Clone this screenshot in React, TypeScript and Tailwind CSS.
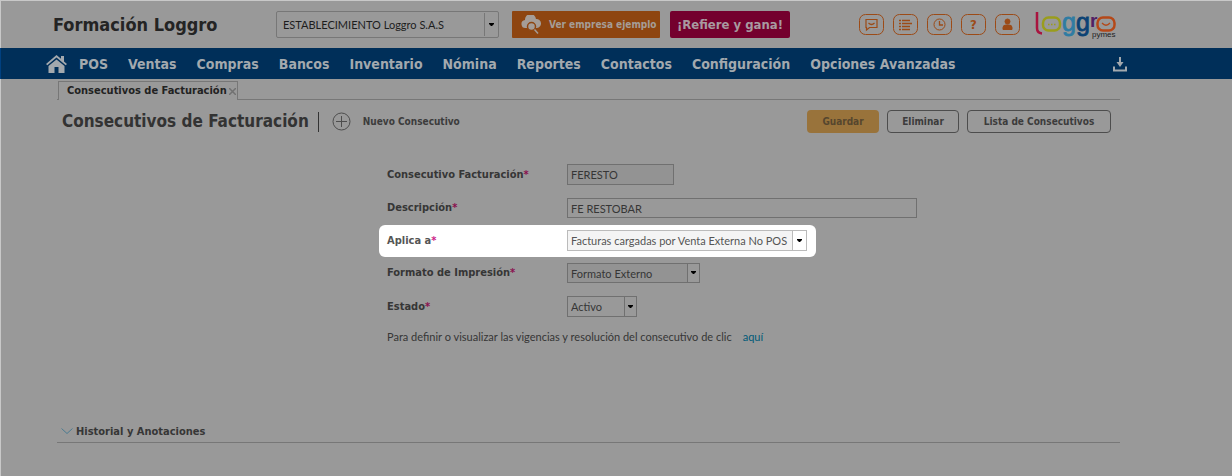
import type { ReactNode } from "react";

const MENU = [
  "POS",
  "Ventas",
  "Compras",
  "Bancos",
  "Inventario",
  "Nómina",
  "Reportes",
  "Contactos",
  "Configuración",
  "Opciones Avanzadas",
];

function Dropdown({
  id,
  label,
  value,
  className = "",
  arrowClassName = "",
}: {
  id: string;
  label?: string;
  value: string;
  className?: string;
  arrowClassName?: string;
}) {
  return (
    <div className={`relative border font-[Lato,sans-serif] ${className}`}>
      <select
        id={id}
        aria-label={label}
        className="block h-full w-full appearance-none bg-transparent pl-[3px] pr-3 pt-[2px] outline-none"
      >
        <option>{value}</option>
      </select>
      <span
        className={`pointer-events-none absolute inset-y-0 right-0 flex w-3 items-center justify-center border-l ${arrowClassName}`}
      >
        <svg width="5" height="3" viewBox="0 0 5 3" aria-hidden>
          <path d="M0 0h5v1L3 3H2L0 1z" fill="#000" />
        </svg>
      </span>
    </div>
  );
}

function FieldLabel({ htmlFor, children }: { htmlFor: string; children: ReactNode }) {
  return (
    <label htmlFor={htmlFor} className="w-[180px] flex-shrink-0 pt-[2px] font-bold">
      {children}
      <span className="text-[#8a104f]">*</span>
    </label>
  );
}

function HeaderIcon({ label, children }: { label: string; children: ReactNode }) {
  return (
    <button type="button" aria-label={label}>
      <svg width="25" height="21" viewBox="0 0 25 21" fill="none" stroke="#9c4b17">
        <rect x="0.5" y="0.5" width="24" height="20" rx="6" />
        {children}
      </svg>
    </button>
  );
}

function Logo() {
  return (
    <svg
      width="82"
      height="32"
      viewBox="0 0 82 32"
      fill="none"
      aria-label="Loggro pymes"
      className="overflow-visible"
    >
      <path d="M3 3V19Q3 24 8 24.500" stroke="#a9143f" strokeWidth="2.500" />
      <rect x="9" y="8.500" width="17" height="13" rx="5.500" stroke="#9a9d1c" strokeWidth="2.500" />
      <path d="M14 15.500h1.500M17 15.500h1.500M20 15.500h1.500" stroke="#9a9d1c" strokeWidth="1.300" />
      <g fontFamily="Liberation Sans" fontSize="25">
        <text x="28" y="22" fill="#2f7ca3" stroke="#2f7ca3" strokeWidth="0.800">g</text>
        <text x="42" y="22" fill="#0b4274" stroke="#0b4274" strokeWidth="0.800">g</text>
      </g>
      <rect x="63.500" y="8.500" width="17" height="13" rx="5.500" stroke="#b54818" strokeWidth="2.500" />
      <path d="M68 14q4 4.500 8 0" stroke="#b54818" strokeWidth="1.300" />
      <text x="56" y="18" fontFamily="Liberation Sans" fontSize="19" fontWeight="bold" fill="#502064">r</text>
      <text x="58" y="28" fontFamily="Liberation Sans" fontSize="8" fill="#222">pymes</text>
    </svg>
  );
}

function Header() {
  return (
    <header className="flex h-[47px] items-center pl-[52px] pr-[116px]">
      <h1 className="w-[223px] flex-shrink-0 text-[18px] font-bold text-[#242424]">Formación Loggro</h1>
      <Dropdown
        id="establecimiento"
        label="Establecimiento"
        value="ESTABLECIMIENTO Loggro S.A.S"
        className="h-[27px] w-[223px] rounded-xs border-[#777] pl-[3px] text-[11px] text-[#1d1d1d]"
        arrowClassName="my-px w-[14px] border-[#777]"
      />
      <button
        type="button"
        className="ml-[13px] flex h-[27px] w-[148px] items-center gap-2 whitespace-nowrap rounded-[1px] bg-[#8e4510] pl-[9px] text-[10px] font-bold text-[#a59d97]"
      >
        <svg width="20" height="19" viewBox="0 0 20 19" aria-hidden>
          <path
            d="M5 13a4 4 0 0 1-1-8 5.500 5.500 0 0 1 11-1 4.500 4.500 0 0 1 1 9z"
            fill="#a59d97"
          />
          <circle cx="10.500" cy="11.500" r="4" fill="#a59d97" stroke="#8e4510" strokeWidth="1.500" />
          <path d="m13.500 14.500 3.500 4" stroke="#a59d97" strokeWidth="1.500" />
        </svg>
        Ver empresa ejemplo
      </button>
      <button
        type="button"
        className="ml-[10px] h-[27px] w-[120px] rounded-xs bg-[#74002e] text-[13px] font-bold text-[#a89aa0]"
      >
        ¡Refiere y gana!
      </button>
      <div className="ml-auto flex items-center">
        <div className="flex gap-[9px] pr-[14px]">
          <HeaderIcon label="Mensajes">
            <path d="M7 5.500h11v8h-7.500l-3 2.500v-2.500H7z M9.500 9q3 3 6 0" strokeWidth="1.200" />
          </HeaderIcon>
          <HeaderIcon label="Lista">
            <path d="M6 6.500h2m1 0h8M6 9.500h2m1 0h10M6 12.500h2m1 0h8M6 15.500h2m1 0h8" strokeWidth="1.700" />
          </HeaderIcon>
          <HeaderIcon label="Historial">
            <circle cx="12.500" cy="10.500" r="5.500" />
            <path d="M12.500 7v4H16" strokeWidth="1.300" />
          </HeaderIcon>
          <HeaderIcon label="Ayuda">
            <text x="9" y="15" fontSize="13" fontWeight="bold" fill="#9c4b17" stroke="none">?</text>
          </HeaderIcon>
          <HeaderIcon label="Usuario">
            <circle cx="12.500" cy="7.500" r="2.500" fill="#9c4b17" />
            <path d="M8 15.500v-2q0-2.500 3-2.500h3q3 0 3 2.500v2z" fill="#9c4b17" />
          </HeaderIcon>
        </div>
        <Logo />
      </div>
    </header>
  );
}

function MainMenu() {
  return (
    <nav className="-ml-px flex h-[31px] items-center border-l border-[#004080] bg-[#002f59] pl-[45px] pr-[104px] pt-px text-[#a3a9ae]">
      <a href="#inicio" aria-label="Inicio" className="mr-3">
        <svg width="21" height="19" viewBox="0 0 21 19" fill="currentColor" aria-hidden>
          <path d="M10.500 0 0 9l1.300 1.300L10.500 2.500l9.200 7.800L21 9l-3-2.600V1h-3v2.800z" />
          <path d="M10.500 4.500 2.500 11v7h6v-6h4v6h6v-7z" />
        </svg>
      </a>
      <ul className="flex gap-5 whitespace-nowrap text-[14px] font-bold">
        {MENU.map((item) => (
          <li key={item}>
            <a href="#menu">{item}</a>
          </li>
        ))}
      </ul>
      <button type="button" aria-label="Descargar" className="ml-auto">
        <svg width="16" height="15" viewBox="0 0 16 15" fill="none" stroke="currentColor" aria-hidden>
          <path d="M2 9.500v4h12v-4" strokeWidth="2" />
          <path d="M8 0v6" strokeWidth="2" />
          <path d="M4.500 5h7L8 10z" fill="currentColor" stroke="none" />
        </svg>
      </button>
    </nav>
  );
}

function Toolbar() {
  return (
    <div className="flex items-center pl-[5px] pr-[9px] pt-[9px]">
      <h2 className="text-[17px] font-bold text-[#333]">Consecutivos de Facturación</h2>
      <span className="ml-[9px] h-5 border-l border-[#333]" />
      <button type="button" className="ml-[13px] flex items-center gap-3 text-[10px] font-bold text-[#3c3c3c]">
        <svg width="19" height="19" viewBox="0 0 19 19" fill="none" stroke="#4d4d4d" aria-hidden>
          <circle cx="9.500" cy="9.500" r="8.500" />
          <path d="M9.500 4v11M4 9.500h11" />
        </svg>
        Nuevo Consecutivo
      </button>
      <div className="ml-auto flex gap-2 text-[10px] font-bold text-[#3c3c3c]">
        <button type="button" className="h-[23px] w-[72px] rounded bg-[#99733b] pb-px text-[#56462e]">
          Guardar
        </button>
        <button type="button" className="h-[23px] w-[72px] rounded border border-[#4d4d4d] pb-px">
          Eliminar
        </button>
        <button type="button" className="h-[23px] w-36 rounded border border-[#4d4d4d] pb-px">
          Lista de Consecutivos
        </button>
      </div>
    </div>
  );
}

function ConsecutivoForm() {
  return (
    <form className="pl-[322px] pt-[29px] text-[11px] text-[#363636]">
      <div className="flex items-center pl-2">
        <FieldLabel htmlFor="consecutivo">Consecutivo Facturación</FieldLabel>
        <input
          id="consecutivo"
          defaultValue="FERESTO"
          className="h-[21px] w-[107px] border border-[#707070] bg-[#939393] px-[3px] pt-px font-[Lato,sans-serif] outline-none"
        />
      </div>
      <div className="mt-[13px] flex items-center pl-2">
        <FieldLabel htmlFor="descripcion">Descripción</FieldLabel>
        <input
          id="descripcion"
          defaultValue="FE RESTOBAR"
          className="h-5 w-[350px] border border-[#707070] bg-transparent px-[3px] pt-px font-[Lato,sans-serif] outline-none"
        />
      </div>
      <div className="mt-[7px] flex h-8 w-[437px] items-center rounded-md bg-white pl-2 text-[#555]">
        <label htmlFor="aplica" className="w-[180px] flex-shrink-0 pt-[2px] font-bold">
          Aplica a<span className="text-[#cc2288]">*</span>
        </label>
        <Dropdown
          id="aplica"
          value="Facturas cargadas por Venta Externa No POS"
          className="h-[21px] w-60 border-[#bbb] bg-[#f4f4f4]"
          arrowClassName="w-[14px] border-[#bbb] bg-white"
        />
      </div>
      <div className="mt-[6px] flex items-center pl-2">
        <FieldLabel htmlFor="formato">Formato de Impresión</FieldLabel>
        <Dropdown
          id="formato"
          value="Formato Externo"
          className="h-5 w-[133px] border-[#707070] bg-[#939393]"
          arrowClassName="border-[#707070] bg-[#999]"
        />
      </div>
      <div className="mt-[13px] flex items-center pl-2">
        <FieldLabel htmlFor="estado">Estado</FieldLabel>
        <Dropdown
          id="estado"
          value="Activo"
          className="h-[21px] w-[70px] border-[#707070]"
          arrowClassName="border-[#707070]"
        />
      </div>
      <p className="mt-3 pl-2 font-[Lato,sans-serif] leading-4">
        Para definir o visualizar las vigencias y resolución del consecutivo de clic
        <a href="#vigencias" className="ml-[11px] text-[#005a78]">
          aquí
        </a>
      </p>
    </form>
  );
}

export default function App() {
  return (
    <div className="min-h-screen border-l border-t border-[#c8c8c8] bg-[#999] font-['DejaVu_Sans_Condensed','DejaVu_Sans',sans-serif]">
      <Header />
      <MainMenu />
      <main className="ml-14 mr-28 pt-[2px]">
        <div className="flex border-b border-[#777]">
          <div className="-mb-px ml-px flex h-[19px] items-center gap-[2px] border-x border-t border-[#777] bg-[#999] pl-2 pr-px text-[11px] font-bold text-[#222]">
            <a href="#consecutivos">Consecutivos de Facturación</a>
            <button type="button" aria-label="Cerrar">
              <svg width="7" height="7" viewBox="0 0 7 7" stroke="#717171" strokeWidth="1.500" aria-hidden>
                <path d="m0 0 7 7M7 0 0 7" />
              </svg>
            </button>
          </div>
        </div>
        <Toolbar />
        <ConsecutivoForm />
        <section className="mt-[79px] border-b border-[#777] pb-[2px] pl-1">
          <button type="button" className="flex items-center gap-[3px] text-[11px] font-bold leading-4 text-[#363636]">
            <svg width="12" height="7" viewBox="0 0 12 7" fill="none" stroke="#4c7c91" aria-hidden>
              <path d="m0.500 0.500 5.500 5 5.500-5" />
            </svg>
            Historial y Anotaciones
          </button>
        </section>
      </main>
    </div>
  );
}
